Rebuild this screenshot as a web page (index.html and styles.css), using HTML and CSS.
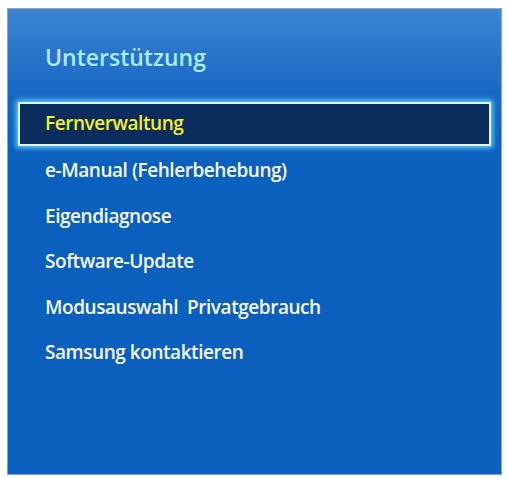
FILE: index.html
```html
<!DOCTYPE html>
<html>
<head>
<meta charset="utf-8">
<link rel="stylesheet" href="styles.css">
</head>
<body>
<div class="panel">
  <div class="title">Unterstützung</div>
  <ul class="menu">
    <li class="item selected">Fernverwaltung</li>
    <li class="item">e-Manual (Fehlerbehebung)</li>
    <li class="item">Eigendiagnose</li>
    <li class="item">Software-Update</li>
    <li class="item">Modusauswahl&nbsp; Privatgebrauch</li>
    <li class="item">Samsung kontaktieren</li>
  </ul>
</div>
</body>
</html>
```
FILE: styles.css
```css
html, body {
  margin: 0;
  padding: 0;
  background: #ffffff;
}
body {
  width: 507px;
  height: 478px;
  overflow: hidden;
  font-family: "Open Sans", "DejaVu Sans", sans-serif;
}
.panel {
  box-sizing: border-box;
  margin: 8px 0 0 7px;
  width: 495px;
  height: 467px;
  border: 1px solid #8ea5c2;
  background: linear-gradient(to bottom, #3d84d2 0px, #2a76cc 40px, #1465c2 95px, #0b5fbd 150px, #0a5fbc 100%);
  padding: 0 0 0 10px;
}
.title {
  color: #a9ecf6;
  font-size: 23px;
  font-weight: 600;
  padding: 31px 0 0 27px;
  line-height: 34px;
  box-sizing: border-box;
  height: 93px;
}
.menu {
  list-style: none;
  margin: 0;
  padding: 0;
}
.item {
  color: #f6faff;
  font-size: 19px;
  font-weight: 600;
  letter-spacing: -0.45px;
  height: 45.5px;
  line-height: 42px;
  padding-left: 27px;
}
.item.selected {
  box-sizing: border-box;
  width: 473px;
  height: 44px;
  line-height: 38px;
  margin-bottom: 3px;
  padding-left: 25px;
  color: #f5ee2c;
  background: #0b2d5e;
  border: 2px solid #dff7ff;
  box-shadow: 0 0 5px 2px #5fd0ff;
}
```
